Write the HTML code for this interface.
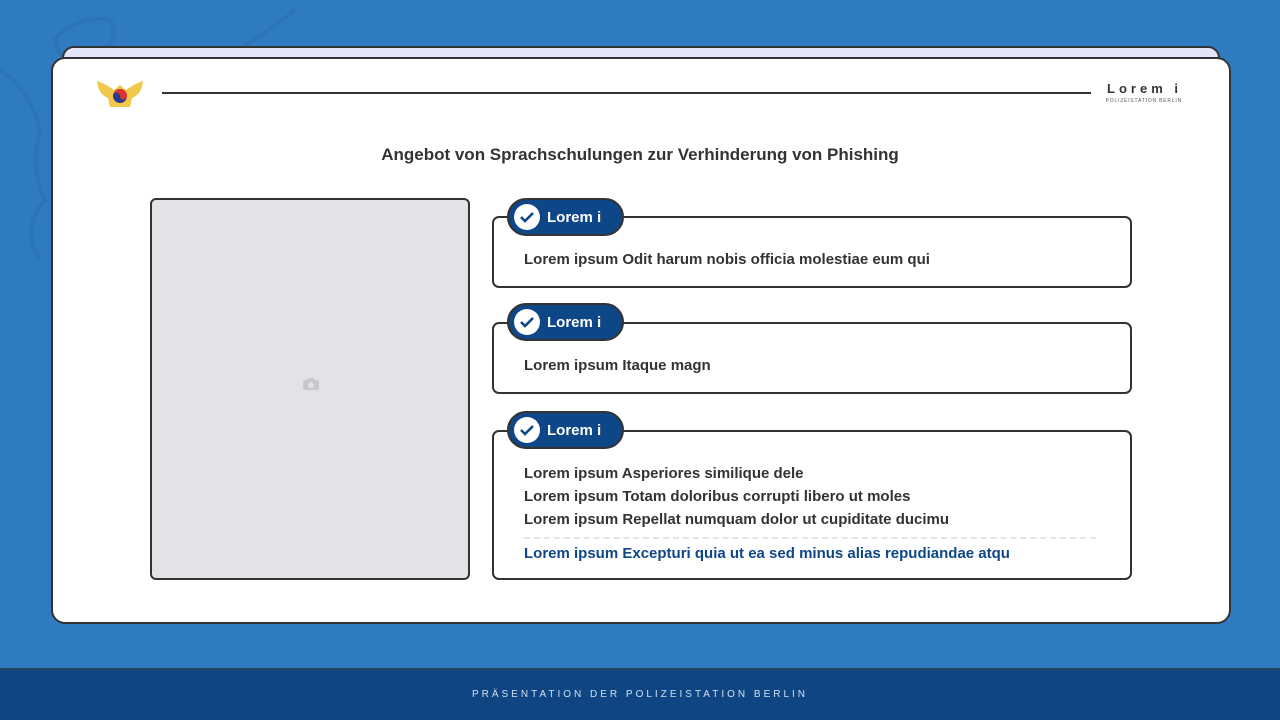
<!DOCTYPE html>
<html><head><meta charset="utf-8"><style>
*{margin:0;padding:0;box-sizing:border-box}
body{width:1280px;height:720px;position:relative;overflow:hidden;background:#2e7bbf;font-family:"Liberation Sans",sans-serif;color:#333}
.tab{position:absolute;left:62px;top:46px;width:1158px;height:40px;background:#e2e4f7;border:2px solid #333;border-radius:12px}
.card{position:absolute;left:51px;top:57px;width:1180px;height:567px;background:#fff;border:2px solid #333;border-radius:14px}
.line{position:absolute;left:162px;top:92px;width:929px;height:2px;background:#333}
.brand{position:absolute;right:98px;top:81px;text-align:right}
.brand b{font-size:13px;letter-spacing:4px;display:block}
.brand small{font-size:5px;letter-spacing:.8px;color:#555;display:block;margin-top:2px}
h1{position:absolute;left:0;width:1280px;top:145px;text-align:center;font-size:17px;font-weight:bold;color:#333}
.img{position:absolute;left:150px;top:198px;width:320px;height:382px;background:#e4e2e6;border:2px solid #333;border-radius:6px}
.box{position:absolute;left:492px;width:640px;background:#fff;border:2px solid #333;border-radius:7px;padding-left:30px;font-size:15px;font-weight:bold;color:#333}
.pill{position:absolute;left:507px;width:117px;height:38px;background:#0e4787;border:2px solid #333;border-radius:19px;color:#fff;font-weight:bold;font-size:15px;line-height:36px;padding-left:38px}
.pill i{position:absolute;left:5px;top:4px;width:26px;height:26px;border-radius:50%;background:#fff}
.foot{position:absolute;left:0;top:668px;width:1280px;height:52px;background:#0f4583;border-top:2px solid #274060;color:#cfe0f3;font-size:10px;letter-spacing:3px;text-align:center;line-height:50px}
</style></head><body>
<svg style="position:absolute;left:0;top:0" width="320" height="260" fill="none" stroke="#2a72b4" stroke-width="4" opacity=".7"><path d="M55 40 Q75 15 110 20 Q120 35 105 50 Q80 45 60 55Z"/><path d="M295 10 Q270 30 245 45"/><path d="M0 70 Q30 90 40 130 Q30 170 45 200 Q20 230 40 260"/></svg>
<div class="tab"></div>
<div class="card"></div>
<svg style="position:absolute;left:96px;top:78px" width="48" height="32"><path d="M1 3 Q10 6 18 12 L24 7 L30 12 Q38 6 47 3 Q46 16 36 20 L34 29 L14 29 L12 20 Q2 16 1 3Z" fill="#f0c94a"/><circle cx="24" cy="18" r="7" fill="#2b3a8f"/><path d="M17 18 a7 7 0 0 1 14 0 a3.5 3.5 0 0 1 -7 0 a3.5 3.5 0 0 0 -7 0Z" fill="#d33"/></svg>
<div class="line"></div>
<div class="brand"><b>Lorem i</b><small>POLIZEISTATION BERLIN</small></div>
<h1>Angebot von Sprachschulungen zur Verhinderung von Phishing</h1>
<div class="img"><svg style="position:absolute;left:150px;top:177px" width="18" height="14"><rect x="1" y="3" width="16" height="10" rx="2" fill="#c9c7cc"/><rect x="6" y="1" width="6" height="3" fill="#c9c7cc"/><circle cx="9" cy="8" r="3" fill="#e4e2e6"/></svg></div>

<div class="box" style="top:216px;height:72px;padding-top:33px">Lorem ipsum Odit harum nobis officia molestiae eum qui</div>
<div class="pill" style="top:198px"><i><svg width="26" height="26"><path d="M7 13 l4 4 l8 -8" stroke="#0e4787" stroke-width="2.6" fill="none"/></svg></i>Lorem i</div>

<div class="box" style="top:322px;height:72px;padding-top:33px">Lorem ipsum Itaque magn</div>
<div class="pill" style="top:303px"><i><svg width="26" height="26"><path d="M7 13 l4 4 l8 -8" stroke="#0e4787" stroke-width="2.6" fill="none"/></svg></i>Lorem i</div>

<div class="box" style="top:430px;height:150px;padding-top:30px;line-height:23px">Lorem ipsum Asperiores similique dele<br>Lorem ipsum Totam doloribus corrupti libero ut moles<br>Lorem ipsum Repellat numquam dolor ut cupiditate ducimu
<div style="width:572px;border-top:2px dashed #e4e4e8;margin:6px 0 3px"></div><span style="color:#0e4787">Lorem ipsum Excepturi quia ut ea sed minus alias repudiandae atqu</span></div>
<div class="pill" style="top:411px"><i><svg width="26" height="26"><path d="M7 13 l4 4 l8 -8" stroke="#0e4787" stroke-width="2.6" fill="none"/></svg></i>Lorem i</div>

<div class="foot">PRÄSENTATION DER POLIZEISTATION BERLIN</div>
</body></html>
